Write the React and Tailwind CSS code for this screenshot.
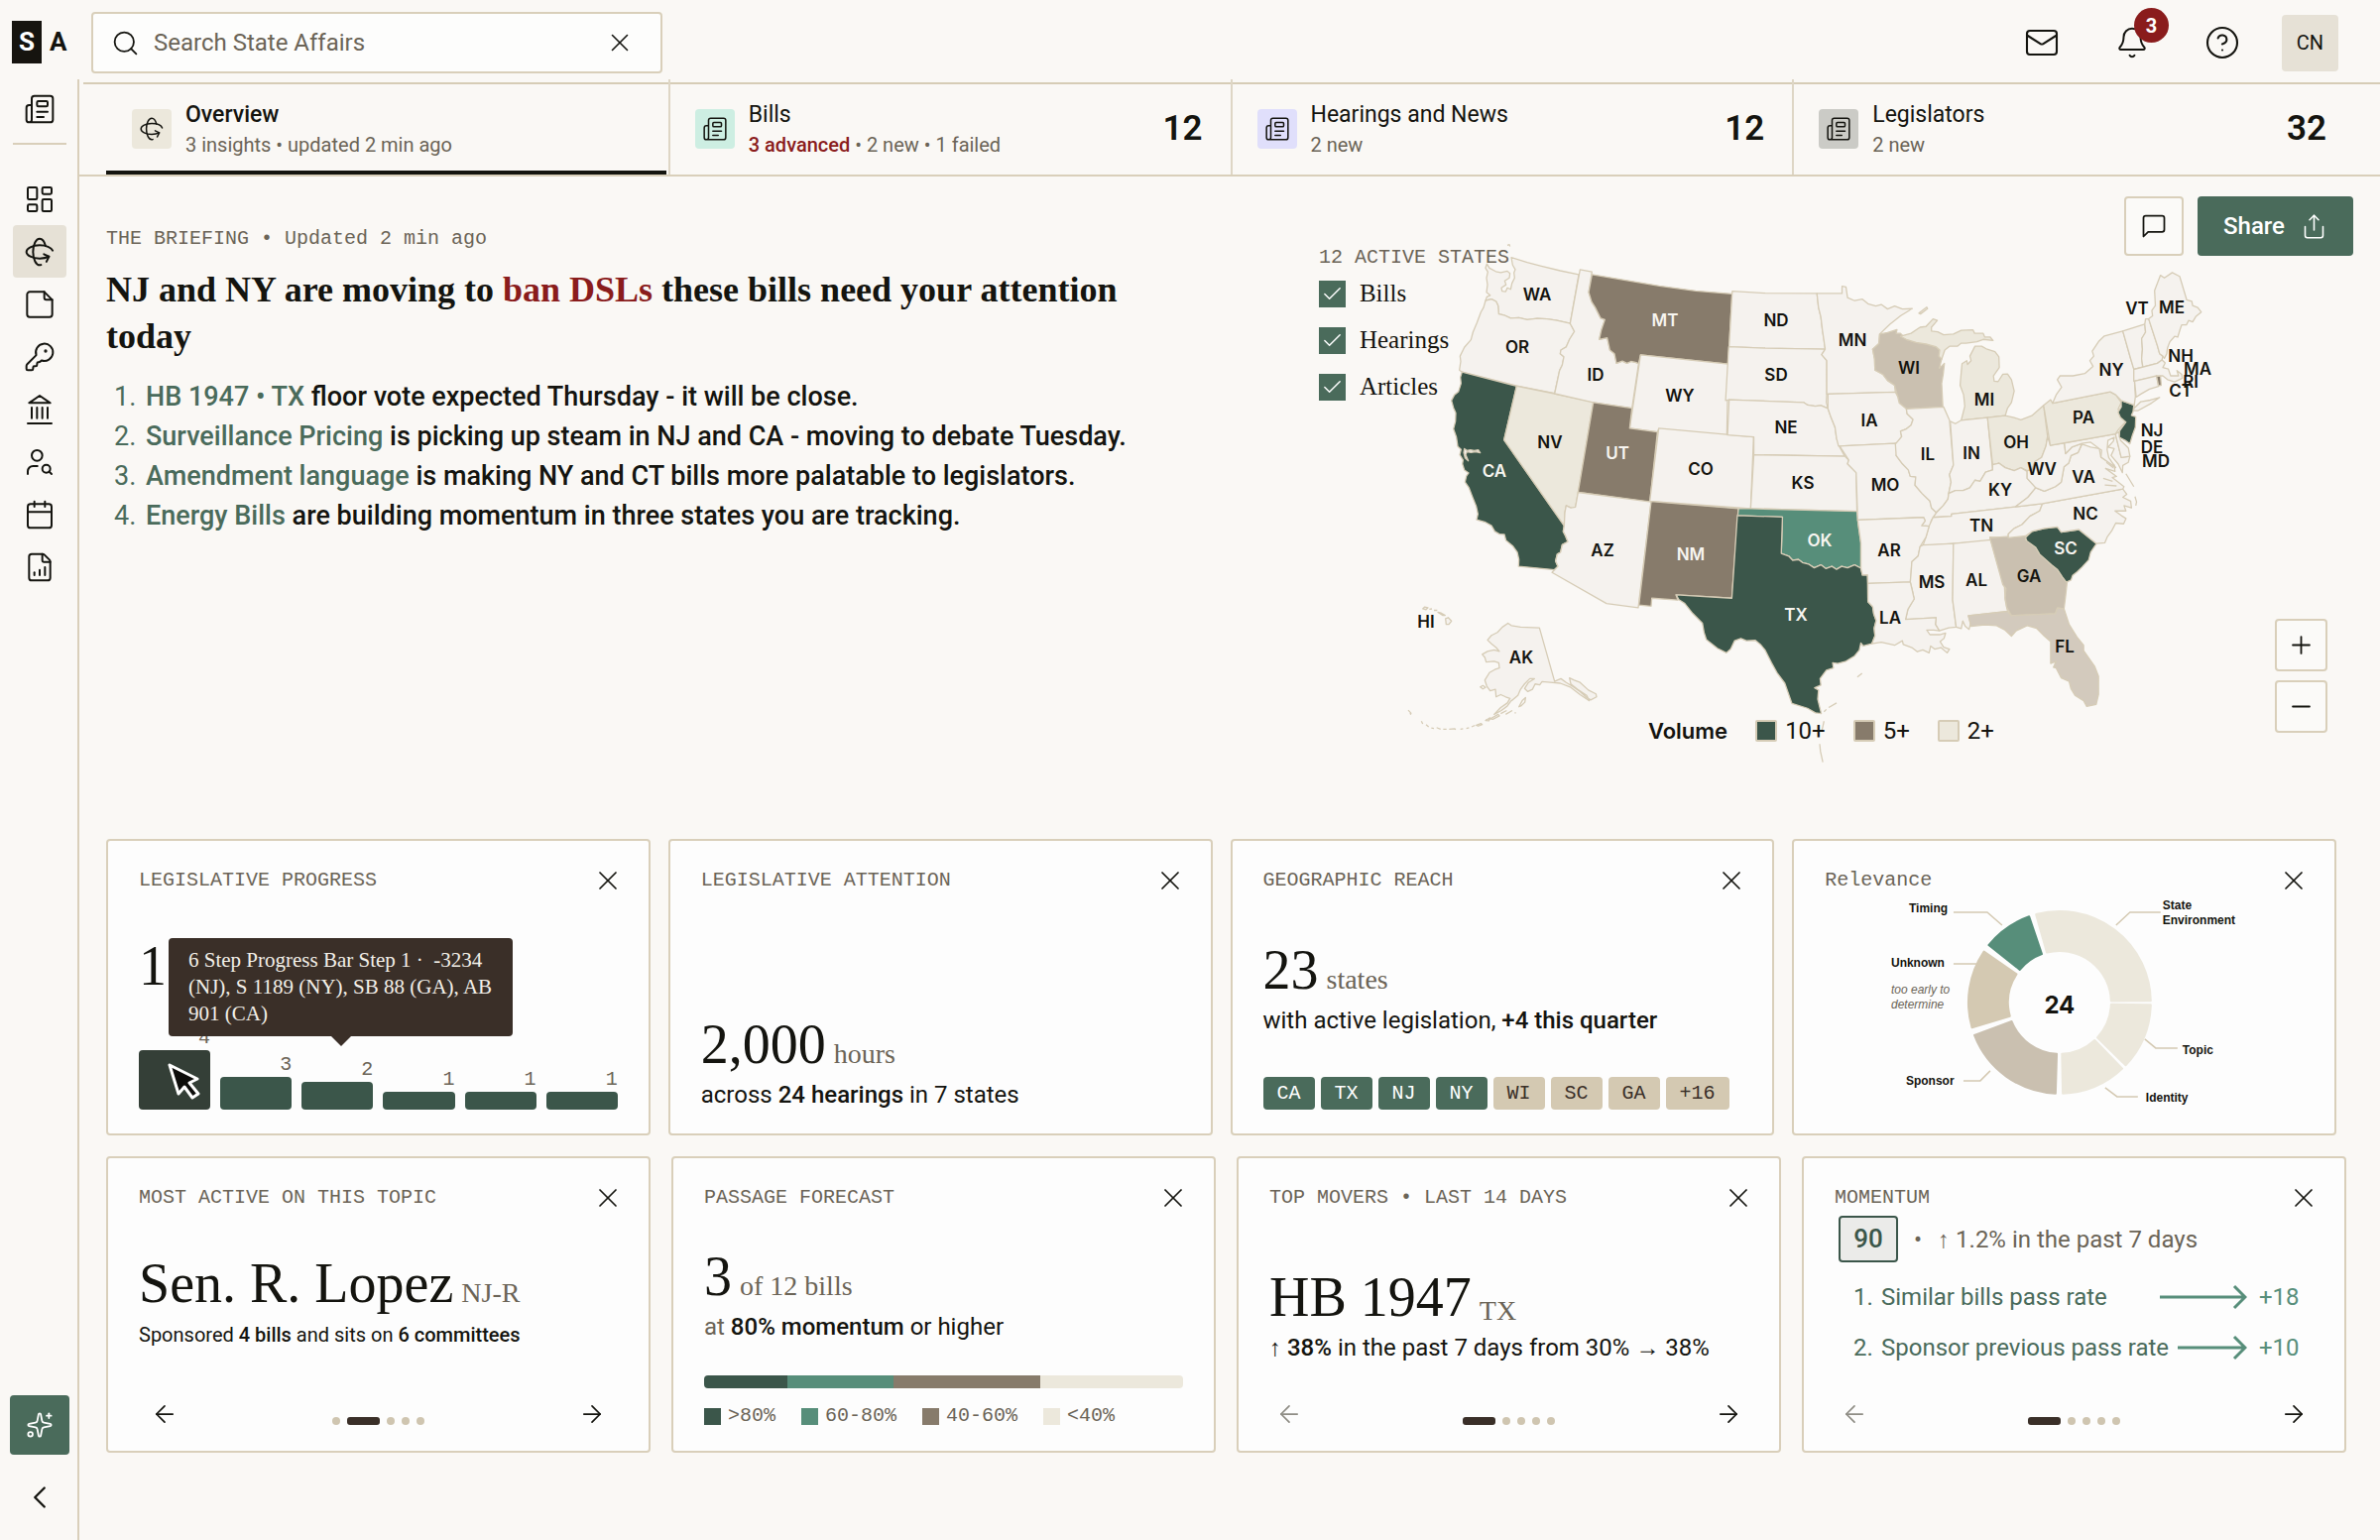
import React from "react";
import {
  Newspaper, LayoutDashboard, Rotate3d, KeyRound, UserSearch, Calendar,
  FileChartColumnIncreasing, Sparkles, ChevronLeft, Search, X, Mail, Bell,
  CircleQuestionMark, Share, Plus, Minus, ArrowLeft, ArrowRight, Check,
} from "lucide-react";

const SERIF = "font-['Liberation_Serif',serif]";
const MONO = "font-['Liberation_Mono',monospace]";

function Glyph({ size, children }) {
  return (
    <svg width={size} height={size} viewBox="0 0 24 24" fill="none" stroke="currentColor" strokeWidth="1.5" strokeLinecap="round" strokeLinejoin="round" aria-hidden="true">
      {children}
    </svg>
  );
}
const NoteIcon = ({ size }) => (
  <Glyph size={size}>
    <path d="M15.5 2.5H4.5a2 2 0 0 0-2 2v15a2 2 0 0 0 2 2h15a2 2 0 0 0 2-2V8.500Z" />
    <path d="M15.500 2.500V7a1.500 1.500 0 0 0 1.500 1.500h4.500" />
  </Glyph>
);
const LandmarkIcon = ({ size }) => (
  <Glyph size={size}>
    <path d="M12 1.500 20 7H4Z" />
    <path d="M6 10.500v8M10 10.500v8M14 10.500v8M18 10.500v8M3 22.500h18" />
  </Glyph>
);

/* ---------- map ---------- */
const BASE = "#f5f2ee";
const DEEP = "#3b564a";
const OCHRE = "#877b6b";
const SAND = "#cac0b0";
const PALE = "#ece8dc";

const WEST = [
  [BASE, "M598 225L606 236 625 245 640 248 660 244 668 250 666 262 652 270 656 280 642 288 644 297 655 298 660 288 670 292 674 276 682 262 680 248 684 240 676 228 672 208 720 221 760 230 820 243 876 253 850 382 810 374 780 370 750 369 720 372 695 367 670 368 650 360 634 357 632 335 626 324 612 318 594 322 598 312 608 308 597 300 600 280 597 262 601 246 594 236Z"],
  [BASE, "M594 322L612 318 626 324 632 335 634 357 650 360 670 368 695 367 720 372 750 369 780 370 810 374 850 382 863 403 848 424 838 444 822 452 820 462 831 470 826 492 818 506 803 566 686 546 523 510 515 505 519 482 517 468 530 445 550 425 556 405 568 380 580 352 588 340Z"],
  [DEEP, "M523 510L688 547 650 689 832 915 829 930 836 942 843 957 826 965 821 985 811 990 806 1008 813 1022 803 1031 694 1022 695 1004 690 985 676 968 656 954 651 938 636 937 622 930 612 915 594 906 567 899 571 884 566 864 554 838 544 815 532 800 536 784 543 776 530 768 524 752 526 742 516 728 520 714 510 706 506 682 497 660 503 640 504 618 497 604 491 585 500 570 512 562 520 540 518 524Z"],
  [PALE, "M688 547L803 567 920 589 874 827 866 866 860 871 852 868 838 862 834 880 832 915 650 689Z"],
  [BASE, "M880 240L916 246 906 300 915 325 926 340 942 368 955 372 944 400 938 424 962 420 970 452 984 462 990 487 1008 481 1022 487 1034 482 1050 485 1057 488 1037 605 920 590 803 567 818 506 826 492 831 470 820 462 822 452 838 444 848 424 863 403 850 382Z"],
  [OCHRE, "M916 253L1120 283 1230 296 1340 304 1328 489 1063 465 1057 488 1050 485 1034 482 1022 487 1008 481 990 487 984 462 970 452 962 420 938 424 944 400 955 372 942 368 926 340 915 325 906 300Z"],
  [BASE, "M1063 465L1328 489 1324 676 1118 660 1114 668 1030 658Z"],
  [OCHRE, "M920 590L1037 605 1030 658 1114 668 1091 853 874 827Z"],
  [BASE, "M1118 658L1405 681 1396 870 1091 850Z"],
  [BASE, "M874 827L1095 852 1056 1131 960 1120 795 1038 803 1031 813 1022 806 1008 811 990 821 985 826 965 843 957 836 942 829 930 832 915 834 880 838 862 852 868 866 866Z"],
  [OCHRE, "M1095 851L1359 870 1339 1106 1170 1097 1176 1111 1097 1106 1095 1127 1058 1124Z"],
  [BASE, "M404 1134l6-5 10 2-6 5zM424 1135l8-1M438 1138l10 0 M450 1143l10 2 12 6-8 0zM473 1160l8-3 10 9-8 9-8 0z"],
  [BASE, "M662 1172L672 1178 700 1182 757 1184 803 1325 822 1318 838 1328 860 1340 880 1352 898 1366 912 1374 930 1366 928 1358 905 1348 880 1328 862 1322 848 1316 852 1332 872 1346 900 1362 908 1376 880 1360 850 1340 820 1330 790 1328 765 1326 758 1334 744 1332 736 1346 722 1352 712 1344 724 1328 742 1318 728 1318 712 1332 700 1346 692 1362 670 1378 660 1390 642 1402 620 1412 640 1394 660 1382 668 1370 655 1366 640 1360 626 1366 624 1346 608 1350 598 1338 592 1322 606 1302 622 1294 636 1290 634 1276 620 1272 596 1274 592 1262 584 1254 600 1246 620 1242 636 1246 626 1236 612 1226 600 1216 612 1204 630 1196 645 1182Z"],
  ["none", "M660 176l6-2 2 5M578 1340l8-4 8 5-8 4zM640 1410l18-8 M655 1412l20-10M608 1424l24-12 4 4-20 9zM594 1428l14-7-4 8zM566 1441l14-5 4 3-12 4zM552 1445l10-4M536 1449l8-2M518 1451l8-1M484 1451l16-1 4 2M466 1451l10 0M446 1447l12 4M430 1448l8 1M414 1439l8 6M400 1430l4 7M360 1401l10 9M366 1408l2 5M695 1392l10-16 10-8-2 12-12 10zM682 1408l4 0"],
  [BASE, "M530 712l8 5 10-2 12 2 12-2 6 8-14-3-14 2-12-2-4 8 8 16-10-8-4-14z"],
];

const EAST = [
  [BASE, "M-84 297L0 302 132 303 136 340 142 365 146 400 150 425 153 450 0 447 -92 443Z"],
  [BASE, "M-93 443L0 447 153 450 144 464 157 480 157 568 156 590 160 606 142 598 128 600 108 597 98 590 -92 583 -101 585Z"],
  [BASE, "M-92 583L98 590 108 597 128 600 142 598 160 606 168 630 178 655 182 685 190 708 203 732 -29 728 -29 681 -96 676Z"],
  [BASE, "M-29 728L203 732 213 742 210 752 232 775 234 877 -37 870Z"],
  ["#578e7a", "M-68 870L-37 870 234 877 237 910 244 960 244 1027 228 1018 210 1026 195 1022 182 1030 170 1022 155 1028 142 1018 125 1026 110 1016 95 1012 85 1004 70 1006 60 995 41 988 44 892 -70 888Z"],
  [DEEP, "M-71 888L44 892 41 988 60 995 70 1006 85 1004 95 1012 110 1016 125 1026 142 1018 155 1028 170 1022 182 1030 195 1022 210 1026 228 1018 244 1027 248 1045 261 1044 262 1115 274 1128 277 1148 283 1165 278 1185 280 1205 272 1226 250 1232 244 1224 240 1243 228 1258 206 1272 185 1278 172 1276 174 1290 156 1296 140 1318 142 1335 126 1342 136 1348 134 1372 143 1410 128 1408 108 1396 68 1383 50 1330 30 1302 16 1276 0 1243 -12 1228 -25 1217 -48 1218 -62 1212 -78 1218 -88 1240 -99 1250 -122 1238 -150 1215 -156 1196 -160 1172 -185 1146 -205 1120 -220 1110 -227 1097 -85 1106Z"],
  [BASE, "M132 303L196 303 196 284 206 286 210 314 228 322 248 318 262 330 282 336 296 332 312 344 330 336 350 344 375 343 345 362 318 384 292 410 290 435 274 450 279 475 280 505 300 516 312 532 330 545 332 563 157 568 157 480 144 464 153 450 146 400 142 365 136 340Z"],
  [SAND, "M292 410L312 406 336 398 334 408 345 408 360 424 385 432 410 436 435 443 445 452 443 468 450 476 444 500 457 487 454 515 450 540 453 602 360 607 342 592 338 575 330 545 312 532 300 516 280 505 279 475 274 450 290 435Z"],
  [PALE, "M345 416L372 408 395 392 410 390 428 370 439 374 424 392 424 402 440 404 455 412 480 410 500 400 530 399 534 408 556 408 560 418 574 418 581 427 556 424 540 430 512 434 500 434 490 442 470 442 458 452 450 476 443 468 445 452 435 443 410 436 385 432 360 424Z"],
  [PALE, "M535 442L552 442 566 450 586 456 596 470 597 498 582 520 584 534 594 535 606 516 618 515 628 530 635 560 628 590 618 605 612 625 500 637 509 600 506 570 497 545 500 510 502 488 514 480 516 490 525 480 522 468Z"],
  [BASE, "M160 568L332 563 338 575 342 592 360 607 362 620 377 635 372 650 360 660 345 666 348 680 340 695 330 698 187 705 182 685 178 655 168 630 160 606Z"],
  [BASE, "M190 705L330 698 340 705 334 730 350 752 365 768 370 785 384 786 382 808 400 830 420 850 424 868 437 880 430 893 424 900 420 916 399 915 408 902 404 893 236 900 232 775 210 752 213 742Z"],
  [BASE, "M360 607L455 602 470 637 480 755 470 780 474 800 468 830 466 845 454 862 436 880 424 868 420 850 400 830 382 808 384 786 370 785 365 768 350 752 334 730 332 700 348 680 345 666 360 660 372 650 377 635 362 620Z"],
  [BASE, "M472 640L485 646 500 637 567 630 580 768 562 774 548 798 535 795 522 815 505 822 485 822 468 830 474 800 470 780 480 755Z"],
  [PALE, "M567 630L612 625 635 630 652 636 680 625 710 598 720 680 716 705 705 735 688 746 680 768 668 770 652 762 635 770 612 762 596 750 580 754Z"],
  [BASE, "M428 893L437 880 454 862 466 845 468 830 485 822 505 822 522 815 535 795 548 798 562 774 580 768 580 754 596 750 612 762 635 770 652 762 668 772 668 790 690 815 670 840 638 865 475 884 475 890Z"],
  [BASE, "M428 893L475 890 475 884 638 865 707 857 700 876 675 890 655 912 635 922 620 937 620 947 573 945 575 955 480 962 402 968 410 945 418 916Z"],
  [BASE, "M236 900L404 893 408 902 399 915 418 916 410 945 395 970 390 995 374 1010 372 1040 370 1063 262 1067 261 1044 248 1045 244 1027 244 960Z"],
  [BASE, "M402 966L480 962 478 1110 487 1182 468 1184 444 1192 434 1175 436 1157 358 1162 364 1135 380 1108 375 1085 370 1063 372 1040 374 1010 390 995 395 970Z"],
  [BASE, "M262 1067L370 1063 375 1085 380 1108 364 1135 358 1162 436 1157 434 1175 444 1192 430 1190 412 1190 420 1202 445 1202 460 1198 456 1212 446 1220 455 1235 470 1240 464 1250 448 1236 432 1240 422 1232 418 1250 402 1242 388 1247 374 1236 352 1228 350 1218 330 1230 296 1222 272 1226 280 1205 278 1185 283 1165 277 1148 274 1128 262 1115Z"],
  [BASE, "M480 962L575 952 598 1035 610 1070 612 1110 618 1140 518 1152 524 1172 520 1188 510 1180 504 1166 500 1186 487 1182 478 1110Z"],
  [SAND, "M573 947L667 940 664 952 690 972 700 990 730 1018 745 1030 758 1050 770 1063 766 1100 762 1134 745 1132 740 1147 628 1152 616 1130 612 1105 614 1080 606 1070Z"],
  ["#d3cabd", "M518 1152L618 1141 628 1152 740 1147 745 1132 762 1134 775 1175 795 1208 812 1230 812 1244 840 1285 850 1312 850 1360 844 1386 820 1391 812 1376 790 1362 780 1345 775 1325 755 1316 742 1290 735 1288 742 1272 728 1278 728 1220 712 1206 692 1185 668 1178 640 1192 628 1206 612 1190 590 1178 560 1176 525 1180Z"],
  [DEEP, "M664 946L680 930 712 922 745 918 755 932 800 925 845 962 830 985 825 1005 808 1024 796 1036 784 1046 780 1058 768 1064 758 1050 745 1030 730 1018 700 990 690 972 667 955Z"],
  [BASE, "M707 857L912 818 922 832 912 840 932 850 934 868 915 862 920 876 892 876 908 888 920 896 914 910 894 908 884 928 872 945 866 960 845 962 800 925 755 932 745 918 712 922 680 930 664 942 620 947 620 937 635 922 655 912 675 890 700 876Z"],
  [BASE, "M638 865L670 840 690 815 712 824 740 812 755 800 762 760 774 750 780 730 798 722 808 700 830 708 852 712 856 734 870 744 890 755 892 772 868 764 896 785 885 788 915 812 912 818 707 857Z"],
  [BASE, "M668 770L680 768 688 746 705 735 716 705 720 680 727 703 763 697 766 725 782 708 808 698 798 722 780 730 774 750 762 760 755 800 740 812 712 824 690 815 668 790Z"],
  [BASE, "M763 697L893 673 908 735 930 732 926 748 912 756 911 775 900 752 882 730 890 712 874 708 888 692 890 682 874 690 872 715 876 735 894 762 870 744 856 734 858 716 852 712 830 695 808 698 782 708 766 725Z"],
  [BASE, "M893 673L902 668 906 690 926 710 930 732 908 735Z"],
  [PALE, "M710 598L728 583 733 592 880 562 894 570 908 590 900 608 906 622 920 640 902 660 893 673 727 703Z"],
  [DEEP, "M908 585L940 597 938 615 934 624 945 628 944 655 936 678 930 699 918 690 903 682 904 665 920 642 906 630 900 616 908 602Z"],
  [BASE, "M733 592L742 570 756 550 745 530 752 520 785 520 815 514 836 495 828 480 838 468 834 455 850 430 865 415 912 402 932 475 940 500 944 575 940 606 958 588 982 584 1006 577 985 592 950 612 940 612 940 597 908 585 894 570 880 562Z"],
  [BASE, "M912 402L968 384 970 405 960 422 962 450 960 475 963 497 940 503 932 475Z"],
  [BASE, "M968 384L970 370 978 370 1000 440 1006 462 1014 468 1012 478 1000 487 963 497 960 475 962 450 960 422 970 405Z"],
  [BASE, "M978 370L988 362 986 348 995 335 993 295 1008 255 1018 262 1038 248 1057 258 1075 320 1088 324 1090 335 1103 340 1112 352 1098 364 1090 378 1080 374 1074 386 1062 386 1058 398 1052 418 1044 416 1032 430 1026 446 1024 462 1018 474 1014 468 1006 462 1000 440Z"],
  [BASE, "M940 503L1000 487 1012 478 1020 486 1014 498 1028 502 1034 520 1054 520 1050 506 1062 516 1064 526 1044 536 1026 530 1014 520 1008 520 940 534Z"],
  [BASE, "M942 534L998 520 1003 548 980 555 958 568 946 576Z"],
  [OCHRE, "M998 520L1008 521 1010 545 1003 546Z"],
  ["none", "M392 355l20-16 2 4-18 14zM920 778l20 34M943 838l4 14-2 10M235 1314l12-10M162 1394l20-12M150 1405l6-6M150 1430l-6 28M139 1490l2 20 6 28M862 790l24 8M866 808l30 2M870 748l18 14"],
];

const LABELS = [
  ["WA", 1550, 297], ["OR", 1530, 350], ["ID", 1609, 378], ["MT", 1679, 323, 1], ["ND", 1791, 323], ["SD", 1791, 378],
  ["WY", 1694, 399], ["NE", 1801, 431], ["NV", 1563, 446], ["UT", 1631, 457, 1], ["CO", 1715, 473], ["KS", 1818, 487],
  ["CA", 1507, 475, 1], ["AZ", 1616, 555], ["NM", 1705, 559, 1], ["OK", 1835, 545, 1], ["TX", 1811, 620, 1],
  ["MN", 1868, 343], ["WI", 1925, 371], ["MI", 2001, 403], ["IA", 1885, 424], ["IL", 1944, 458], ["IN", 1988, 457],
  ["OH", 2033, 446], ["PA", 2101, 421], ["NY", 2129, 373], ["VT", 2155, 311], ["ME", 2190, 310], ["NH", 2199, 359],
  ["MA", 2216, 372], ["RI", 2209, 385], ["CT", 2199, 394], ["NJ", 2170, 434], ["DE", 2170, 451], ["MD", 2174, 465],
  ["WV", 2059, 473], ["VA", 2101, 481], ["MO", 1901, 489], ["KY", 2017, 494], ["NC", 2103, 518], ["TN", 1998, 530],
  ["SC", 2083, 553, 1], ["AR", 1905, 555], ["MS", 1948, 587], ["AL", 1993, 585], ["GA", 2046, 581], ["LA", 1906, 623],
  ["FL", 2082, 652], ["HI", 1438, 627], ["AK", 1534, 663],
];

function UsMap() {
  return (
    <svg viewBox="1321 178 1079 600" className="block h-auto w-full" role="img" aria-label="Bill volume by state">
      <g stroke="#d6ccb6" strokeWidth="1.300" strokeLinejoin="round">
        <g transform="translate(1300 180) scale(.33333 .38268)">
          {WEST.map(([fill, d]) => <path key={d} d={d} fill={fill} vectorEffect="non-scaling-stroke" />)}
        </g>
        <g transform="translate(1780 180) scale(.39541 .38268)">
          {EAST.map(([fill, d]) => <path key={d} d={d} fill={fill} vectorEffect="non-scaling-stroke" />)}
        </g>
      </g>
      <g fontFamily="Inter, sans-serif" fontWeight="600" fontSize="17" textAnchor="middle">
        {LABELS.map(([t, x, y, light]) => (
          <text key={t} x={x} y={y + 6} fill={light ? "#f7f5f0" : "#14140f"}>{t}</text>
        ))}
      </g>
    </svg>
  );
}

/* ---------- shell ---------- */
function Header() {
  return (
    <header className="flex h-20 items-center pr-[42px]">
      <div className="flex w-[92px] shrink-0 items-center pt-1 pl-3 text-[26px] font-bold leading-none">
        <span className="flex h-[43px] w-[30px] items-center justify-center bg-[#16140f] text-white">S</span>
        <span className="ml-2">A</span>
      </div>
      <label className="mt-1.5 flex h-[62px] w-[576px] items-center rounded-[4px] border-2 border-[#d9cfba] bg-[#fdfdfc] pr-5 pl-[18px]">
        <Search size={29} strokeWidth={1.500} />
        <input type="text" aria-label="Search" placeholder="Search State Affairs" className="ml-3.5 min-w-0 flex-1 bg-transparent text-2xl outline-none placeholder:text-[#6b6457]" />
        <button type="button" aria-label="Clear search" className="px-1.5"><X size={30} strokeWidth={1.300} /></button>
      </label>
      <div className="mt-1.5 ml-auto flex items-center">
        <button type="button" aria-label="Messages"><Mail size={36} strokeWidth={1.400} /></button>
        <button type="button" aria-label="Notifications, 3 new" className="relative ml-14">
          <Bell size={34} strokeWidth={1.400} />
          <span className="absolute -top-[18px] left-[19px] flex size-[35px] items-center justify-center rounded-full bg-[#8a1c1c] text-xl font-bold text-white">3</span>
        </button>
        <button type="button" aria-label="Help" className="ml-14"><CircleQuestionMark size={36} strokeWidth={1.400} /></button>
        <button type="button" className="ml-[42px] flex size-[57px] items-center justify-center rounded-[4px] bg-[#e6e1d6] text-xl">CN</button>
      </div>
    </header>
  );
}

const NAV = [
  ["Dashboard", LayoutDashboard], ["Insights", Rotate3d], ["Notes", NoteIcon], ["Keys", KeyRound], ["Government", LandmarkIcon],
  ["People", UserSearch], ["Calendar", Calendar], ["Reports", FileChartColumnIncreasing],
];

function Sidebar() {
  return (
    <nav aria-label="Primary" className="flex w-20 shrink-0 flex-col items-center border-r-2 border-[#d9cfba] pb-6 pl-0.5">
      <a href="#news" aria-label="News" className="mt-3.5"><Newspaper size={32} strokeWidth={1.500} /></a>
      <hr className="mt-[18px] mb-7 h-0.5 w-[54px] border-0 bg-[#d9cfba]" />
      {NAV.map(([name, Icon]) => (
        <a key={name} href={"#" + name.toLowerCase()} aria-label={name}
          className={name === "Insights" ? "flex h-[53px] w-[54px] items-center justify-center rounded-[4px] bg-[#e6e1d6]" : "flex h-[53px] w-[54px] items-center justify-center"}>
          <Icon size={32} strokeWidth={1.500} />
        </a>
      ))}
      <button type="button" aria-label="Assistant" className="mt-auto flex size-[60px] items-center justify-center rounded-[4px] bg-[#4a6b5b] text-white">
        <Sparkles size={28} strokeWidth={1.500} />
      </button>
      <button type="button" aria-label="Collapse" className="mt-6"><ChevronLeft size={38} strokeWidth={1.500} /></button>
    </nav>
  );
}

function Tab({ active, icon: Icon, tint, title, count, children }) {
  return (
    <button type="button" role="tab" aria-selected={!!active}
      className={active ? "relative flex items-center pt-1 pl-[26px] text-left" : "relative flex items-center border-l-2 border-[#ded6c5] pt-1 pr-7 pl-[25px] text-left"}>
      <span className={"flex size-10 items-center justify-center rounded-[4px] " + tint}><Icon size={26} strokeWidth={1.400} /></span>
      <span className="mt-0.5 ml-3.5 flex flex-col">
        <span className={active ? "text-[23px] leading-[30px] font-medium" : "text-[23px] leading-[30px]"}>{title}</span>
        <span className="text-xl leading-[30px] text-[#6b6457]">{children}</span>
      </span>
      {count && <span className="ml-auto text-[35px] leading-10 font-semibold">{count}</span>}
      {active && <span className="absolute right-0.5 bottom-0 left-0 h-1 bg-[#14140f]" />}
    </button>
  );
}

function Tabs() {
  return (
    <div role="tablist" className="relative grid h-[98px] grid-cols-4 border-b-2 border-[#d9cfba] pr-[26px] pl-[27px] before:absolute before:top-[3px] before:right-0 before:left-1 before:h-0.5 before:bg-[#d6ccb6]">
      <Tab active icon={Rotate3d} tint="bg-[#ece8dc]" title="Overview">3 insights • updated 2 min ago</Tab>
      <Tab icon={Newspaper} tint="bg-[#cdeee2]" title="Bills" count="12">
        <span className="font-medium text-[#8a1c1c]">3 advanced</span> • 2 new • 1 failed
      </Tab>
      <Tab icon={Newspaper} tint="bg-[#e0dffb]" title="Hearings and News" count="12">2 new</Tab>
      <Tab icon={Newspaper} tint="bg-[#cbcbc6]" title="Legislators" count="32">2 new</Tab>
    </div>
  );
}

const BRIEF = [
  ["HB 1947 • TX", "floor vote expected Thursday - it will be close."],
  ["Surveillance Pricing", "is picking up steam in NJ and CA - moving to debate Tuesday."],
  ["Amendment language", "is making NY and CT bills more palatable to legislators."],
  ["Energy Bills", "are building momentum in three states you are tracking."],
];

function Briefing() {
  return (
    <section className="max-w-[1070px] pt-[47px]">
      <p className={MONO + " text-xl leading-8 text-[#6b6457]"}>THE BRIEFING • Updated 2 min ago</p>
      <h1 className={SERIF + " mt-3 text-4xl leading-[47px] font-bold"}>
        NJ and NY are moving to <span className="text-[#8a1c1c]">ban DSLs</span> these bills need your attention today
      </h1>
      <ol className="mt-[17px] text-[27px] leading-10 font-medium">
        {BRIEF.map(([lead, rest], i) => (
          <li key={lead} className="flex pl-2">
            <span className="w-8 shrink-0 font-normal text-[#4a6b5b]">{i + 1}.</span>
            <span><a href={"#brief-" + (i + 1)} className="text-[#4a6b5b]">{lead}</a> {rest}</span>
          </li>
        ))}
      </ol>
    </section>
  );
}

function MapPanel() {
  return (
    <section className="relative">
      <UsMap />
      <fieldset className="absolute top-[69px] left-[9px]">
        <legend className={MONO + " mb-[5px] text-xl leading-[26px] text-[#6b6457]"}>12 ACTIVE STATES</legend>
        {["Bills", "Hearings", "Articles"].map((n) => (
          <label key={n} className={SERIF + " mb-[11px] flex h-9 items-center gap-3.5 text-[25px]"}>
            <span className="relative flex size-[27px]">
              <input type="checkbox" defaultChecked className="size-[27px] appearance-none bg-[#4a6b5b]" />
              <Check size={23} strokeWidth={1.500} className="pointer-events-none absolute top-0.5 left-0.5 text-white" />
            </span>
            {n}
          </label>
        ))}
      </fieldset>
      <div className="absolute top-5 right-[27px] flex gap-3.5">
        <button type="button" aria-label="Comment" className="flex size-[60px] items-center justify-center rounded-[4px] border-2 border-[#d9cfba] bg-[#fbfaf8]">
          <Glyph size={28}><path d="M21 15a2 2 0 0 1-2 2H7l-4 4V5a2 2 0 0 1 2-2h14a2 2 0 0 1 2 2z" /></Glyph>
        </button>
        <button type="button" className="flex h-[60px] w-[157px] items-center justify-center gap-4 rounded-[4px] bg-[#4a6b5b] text-2xl font-medium text-white">
          Share <Share size={27} strokeWidth={1.400} />
        </button>
      </div>
      <div className="absolute top-[446px] right-[53px] flex flex-col gap-[9px]">
        <button type="button" aria-label="Zoom in" className="flex size-[53px] items-center justify-center rounded-[4px] border-2 border-[#d9cfba] bg-[#fbfaf8]"><Plus size={29} strokeWidth={1.500} /></button>
        <button type="button" aria-label="Zoom out" className="flex size-[53px] items-center justify-center rounded-[4px] border-2 border-[#d9cfba] bg-[#fbfaf8]"><Minus size={29} strokeWidth={1.500} /></button>
      </div>
      <div className="absolute top-[543px] left-[341px] flex items-center text-2xl leading-8">
        <span className="font-['Inter',sans-serif] text-[22px] font-semibold">Volume</span>
        <span className="mr-2 ml-7 size-[22px] rounded-[2px] border-2 border-[#d6ccb6] bg-[#3b564a]" />10+
        <span className="mr-2 ml-7 size-[22px] rounded-[2px] border-2 border-[#d6ccb6] bg-[#877b6b]" />5+
        <span className="mr-2 ml-7 size-[22px] rounded-[2px] border-2 border-[#d6ccb6] bg-[#ece8dc]" />2+
      </div>
    </section>
  );
}

/* ---------- cards ---------- */
function Card({ title, children }) {
  return (
    <article className="flex h-[299px] min-w-0 flex-col rounded-[4px] border-2 border-[#d9cfba] bg-[#fdfdfd] px-[31px] pt-6 pb-6">
      <div className="flex h-8 shrink-0 items-center justify-between">
        <h2 className={MONO + " text-xl leading-8 text-[#6b6457]"}>{title}</h2>
        <button type="button" aria-label={"Dismiss " + title} className="-mr-1.5"><X size={32} strokeWidth={1.300} /></button>
      </div>
      {children}
    </article>
  );
}

function Figure({ value, unit, low }) {
  return (
    <p className={SERIF + (low ? " flex items-end gap-2 leading-[52px]" : " flex items-baseline gap-2 leading-[52px]")}>
      <span className="text-[56px]">{value}</span>
      <span className={low ? "text-[28px] leading-6 text-[#6b6457]" : "text-[28px] text-[#6b6457]"}>{unit}</span>
    </p>
  );
}

function Pager({ page, first }) {
  return (
    <div className={first ? "mt-auto -mb-[3px] flex h-8 items-center justify-between px-1.5" : "mt-auto -mb-[3px] flex h-8 items-center justify-between px-3"}>
      <button type="button" aria-label="Previous" className={first ? "text-[#8f8d85]" : ""}><ArrowLeft size={28} strokeWidth={1.500} /></button>
      <div className="mt-3.5 flex items-center gap-[7px]">
        {[0, 1, 2, 3, 4].map((i) => (
          <span key={i} className={i === page ? "h-2 w-[33px] rounded-[3px] bg-[#3a2f28]" : "size-2 rounded-full bg-[#cfc5b0]"} />
        ))}
      </div>
      <button type="button" aria-label="Next"><ArrowRight size={28} strokeWidth={1.500} /></button>
    </div>
  );
}

function Cursor() {
  return (
    <svg width="36" height="38" viewBox="0 0 36 38" className="absolute top-3 left-7" aria-hidden="true">
      <path d="M3 3 31 17 23 21 32 32 26 36 18 25 12 32Z" fill="#0d0d0b" stroke="#fff" strokeWidth="3" strokeLinejoin="round" />
    </svg>
  );
}

const BARS = [[4, 60], [3, 33], [2, 28], [1, 18], [1, 18], [1, 18]];

function ProgressCard() {
  return (
    <Card title="LEGISLATIVE PROGRESS">
      <div className="relative mt-10 flex flex-1 flex-col justify-between">
        <p className={SERIF + " text-[56px] leading-[60px]"}>1</p>
        <div className="flex items-end gap-2.5">
          {BARS.map(([n, h], i) => (
            <div key={i} className="flex flex-1 flex-col">
              <span className={MONO + " text-right text-xl leading-6 text-[#6b6457]"}>{n}</span>
              <div className={i ? "rounded-[4px] bg-[#3b564a]" : "relative rounded-[4px] bg-[#343f37]"} style={{ height: h }}>
                {i === 0 && <Cursor />}
              </div>
            </div>
          ))}
        </div>
        <div role="tooltip" className={SERIF + " absolute top-0.5 left-[30px] w-[347px] rounded-[4px] bg-[#3a2f28] px-5 py-[9px] text-[21px] leading-[27px] text-[#f3efe8]"}>
          6 Step Progress Bar Step 1 ·&nbsp; -3234<br />(NJ), S 1189 (NY), SB 88 (GA), AB<br />901 (CA)
          <svg width="20" height="10" viewBox="0 0 20 10" className="absolute top-full left-[164px]" aria-hidden="true"><path d="M0 0H20L10 10Z" fill="#3a2f28" /></svg>
        </div>
      </div>
    </Card>
  );
}

const point = (r, deg) => {
  const a = (deg * Math.PI) / 180;
  return (2078 + r * Math.sin(a)).toFixed(1) + " " + (1010 - r * Math.cos(a)).toFixed(1);
};
const slice = (a, b) =>
  "M" + point(92, a) + "A92 92 0 " + (b - a > 180 ? 1 : 0) + " 1 " + point(92, b) +
  "L" + point(52, b - 0.6) + "A52 52 0 0 0 " + point(52, a + 0.6) + "Z";

const SLICES = [
  [-15, 89, PALE], [91.500, 133.500, PALE], [136.500, 178, PALE], [182.500, 249, SAND], [254, 304, "#d4c9b2"], [309, 340.500, "#578e7a"],
];

function RelevanceCard() {
  return (
    <Card title="Relevance">
      <svg viewBox="1841 903 483 215" className="block h-auto w-full" role="img" aria-label="Relevance score 24">
        {SLICES.map(([a, b, c]) => <path key={a} d={slice(a, b)} fill={c} stroke={c} strokeWidth="2" strokeLinejoin="round" />)}
        <g fill="none" stroke="#d4c9b2" strokeWidth="1.500">
          <path d="M1971 919H2005L2020 932M1971 971H1994M1981 1089H1998L2008 1079M2180 919H2149L2135 932M2164 1047L2175 1056H2197M2124 1096L2136 1105H2157" />
        </g>
        <g fontFamily="Liberation Sans, sans-serif" fontWeight="700" fontSize="12" fill="#14140f">
          <text x="1926" y="919">Timing</text>
          <text x="2182" y="916">State</text>
          <text x="2182" y="931">Environment</text>
          <text x="1908" y="974">Unknown</text>
          <text x="2202" y="1062">Topic</text>
          <text x="2165" y="1110">Identity</text>
          <text x="1923" y="1093">Sponsor</text>
          <g fontWeight="400" fontStyle="italic" fill="#6b6457">
            <text x="1908" y="1001">too early to</text>
            <text x="1908" y="1016">determine</text>
          </g>
          <text x="2078" y="1021" fontFamily="Inter, sans-serif" fontSize="24" textAnchor="middle">24</text>
        </g>
      </svg>
    </Card>
  );
}

const SHARES = [
  [">80%", 84, "bg-[#3b564a]"], ["60-80%", 107, "bg-[#578e7a]"], ["40-60%", 149, "bg-[#877b6b]"], ["<40%", 144, "bg-[#ece8dc]"],
];

function Trend({ n, label, value, length }) {
  return (
    <li className="flex items-center text-[#4a6b5b]">
      <span className="w-7 shrink-0">{n}.</span>
      <span className="whitespace-nowrap">{label}</span>
      <svg width={length} height="26" viewBox={"0 0 " + length + " 26"} className="ml-auto shrink-0" fill="none" stroke="#578e7a" strokeWidth="3" aria-hidden="true">
        <path d={"M0 13H" + (length - 2) + "M" + (length - 13) + " 2L" + (length - 2) + " 13L" + (length - 13) + " 24"} />
      </svg>
      <span className="w-[53px] shrink-0 pl-3 text-[#578e7a]">{value}</span>
    </li>
  );
}

export default function App() {
  return (
    <div className="flex min-h-screen flex-col bg-[#faf8f5] font-['Roboto',sans-serif] text-[#14140f]">
      <Header />
      <div className="flex flex-1">
        <Sidebar />
        <main className="min-w-0 flex-1">
          <Tabs />
          <div className="grid grid-cols-[9fr_8fr] pb-[68px] pl-[27px]">
            <Briefing />
            <MapPanel />
          </div>
          <div className="grid grid-cols-4 gap-[18px] pr-11 pl-[27px]">
            <ProgressCard />
            <Card title="LEGISLATIVE ATTENTION">
              <div className="mt-auto">
                <Figure value="2,000" unit="hours" />
                <p className="text-2xl leading-[30px]">across <b className="font-medium">24 hearings</b> in 7 states</p>
              </div>
            </Card>
            <Card title="GEOGRAPHIC REACH">
              <div className="mt-auto">
                <Figure value="23" unit="states" />
                <p className="text-2xl leading-[30px]">with active legislation, <b className="font-medium">+4 this quarter</b></p>
                <ul className={MONO + " mt-[42px] flex gap-1.5 text-xl leading-[33px]"}>
                  {["CA", "TX", "NJ", "NY"].map((s) => <li key={s} className="rounded-[4px] bg-[#4a6b5b] px-3.5 text-white">{s}</li>)}
                  {["WI", "SC", "GA", "+16"].map((s) => <li key={s} className="rounded-[4px] bg-[#d4c9b2] px-3.5 text-[#3a2f28]">{s}</li>)}
                </ul>
              </div>
            </Card>
            <RelevanceCard />
          </div>
          <div className="mt-[21px] grid grid-cols-4 gap-[21px] pr-[34px] pb-[88px] pl-[27px]">
            <Card title="MOST ACTIVE ON THIS TOPIC">
              <div className="mt-11">
                <Figure value="Sen. R. Lopez" unit="NJ-R" />
                <p className="text-xl leading-8">Sponsored <b className="font-medium">4 bills</b> and sits on <b className="font-medium">6 committees</b></p>
              </div>
              <Pager page={1} />
            </Card>
            <Card title="PASSAGE FORECAST">
              <div className="mt-[37px]">
                <Figure value="3" unit="of 12 bills" />
                <p className="text-2xl leading-[30px]"><span className="text-[#6b6457]">at</span> <b className="font-medium">80% momentum</b> or higher</p>
                <div className="mt-[34px] flex h-[13px] overflow-hidden rounded-[4px]">
                  {SHARES.map(([n, w, c]) => <div key={n} className={c} style={{ flexGrow: w }} />)}
                </div>
                <ul className={MONO + " mt-3 flex gap-[26px] text-xl leading-8 text-[#6b6457]"}>
                  {SHARES.map(([n, , c]) => <li key={n} className="flex items-center gap-[7px]"><span className={"size-[17px] " + c} />{n}</li>)}
                </ul>
              </div>
            </Card>
            <Card title="TOP MOVERS • LAST 14 DAYS">
              <div className="mt-[58px]">
                <Figure value="HB 1947" unit="TX" low />
                <p className="mt-2.5 text-2xl leading-[30px]"><b className="font-medium">↑ 38%</b> in the past 7 days from 30% → 38%</p>
              </div>
              <Pager page={0} first />
            </Card>
            <Card title="MOMENTUM">
              <div className="mt-0.5 flex items-center pl-1 text-2xl text-[#6b6457]">
                <span className="flex h-[47px] w-[60px] items-center justify-center rounded-[4px] border-2 border-[#3b564a] bg-[#ebebe9] text-[26px] font-medium text-[#3b564a]">90</span>
                <span className="mr-4 ml-4">•</span>
                <span>↑ 1.2% in the past 7 days</span>
              </div>
              <ol className="mt-[15px] flex flex-col gap-[11px] pr-3.5 pl-[19px] text-2xl leading-10">
                <Trend n={1} label="Similar bills pass rate" value="+18" length={88} />
                <Trend n={2} label="Sponsor previous pass rate" value="+10" length={70} />
              </ol>
              <Pager page={0} first />
            </Card>
          </div>
        </main>
      </div>
    </div>
  );
}
